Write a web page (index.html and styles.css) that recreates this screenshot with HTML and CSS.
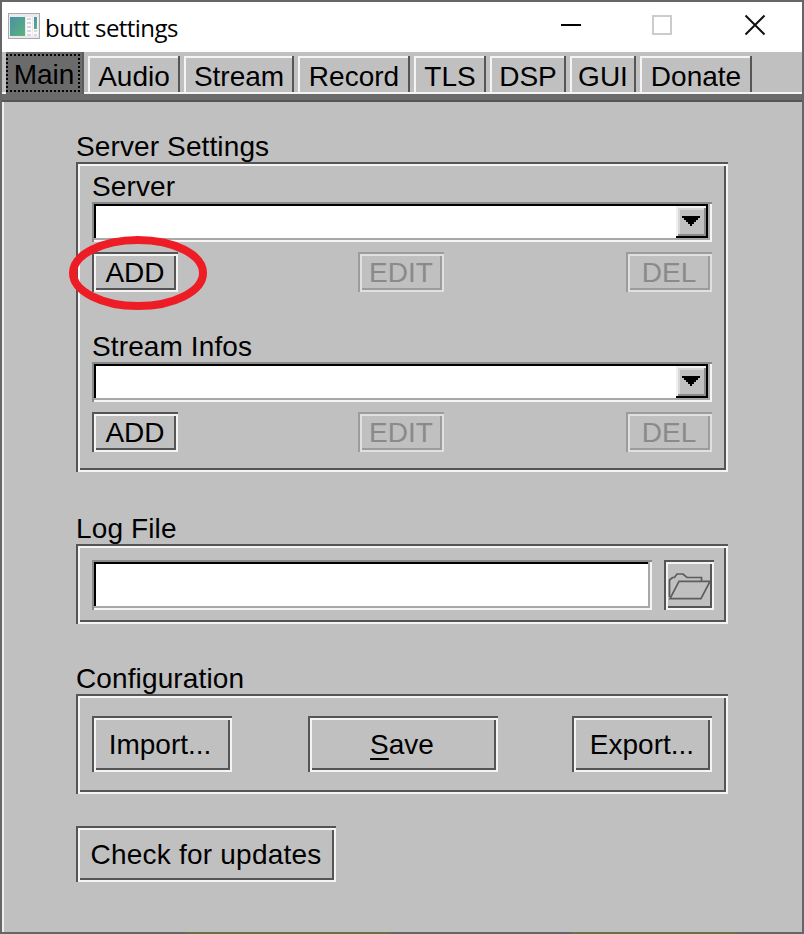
FILE: index.html
```html
<!DOCTYPE html>
<html lang="en">
<head>
<meta charset="utf-8">
<title>butt settings</title>
<link rel="stylesheet" href="styles.css">
</head>
<body>
<div class="window">
  <header class="titlebar">
    <svg class="app-icon" width="32" height="26" viewBox="0 0 32 26">
      <defs>
        <linearGradient id="screen" x1="0" y1="0" x2="1" y2="1"><stop offset="0" stop-color="#4a8fa8"/><stop offset="1" stop-color="#5bb577"/></linearGradient>
      </defs>
      <rect x=".5" y=".5" width="31" height="25" fill="#e9e9ef" stroke="#a9a9b0"/>
      <rect x="2" y="4" width="15" height="19" fill="url(#screen)"/>
      <path d="M18 4h6v19h-6zM25 4h5v19h-5z" fill="#fafafc"/>
      <path d="M19 6h4M19 10h4M19 14h4M19 18h4M19 22h4M26 18h3M26 22h3" stroke="#b3b3bb" stroke-width="1"/>
      <rect x="26" y="4" width="3" height="12" fill="url(#screen)"/>
    </svg>
    <h1 class="title">butt settings</h1>
    <svg class="controls" width="206" height="22" viewBox="0 0 206 22" fill="none" stroke-width="2">
      <path d="M1 11h20" stroke="#000"/>
      <rect x="93" y="2" width="18" height="18" stroke="#ccc"/>
      <path d="M185.500 1.500l19 19M204.500 1.500l-19 19" stroke="#111"/>
    </svg>
  </header>
  <nav class="tabs">
    <div class="tab active">Main</div>
    <div class="tab audio">Audio</div>
    <div class="tab stream">Stream</div>
    <div class="tab record">Record</div>
    <div class="tab tls">TLS</div>
    <div class="tab dsp">DSP</div>
    <div class="tab gui">GUI</div>
    <div class="tab donate">Donate</div>
  </nav>
  <main class="panel">
    <h2 class="label">Server Settings</h2>
    <section class="group server-group">
      <div class="label">Server</div>
      <div class="field combo"><span class="drop"><svg width="18" height="10" viewBox="0 0 18 10"><path d="M0 0h18v2h-2v2h-2v2h-2v2h-2v2h-2v-2h-2v-2h-2v-2h-2v-2h-2z"/></svg></span></div>
      <div class="row">
        <div class="anchor"><button class="btn small">ADD</button>
          <svg class="ring" width="140" height="76" viewBox="0 0 140 76"><ellipse cx="70" cy="38" rx="65" ry="33" fill="none" stroke="#ee1c24" stroke-width="8"/></svg>
        </div>
        <button class="btn small off edit" disabled>EDIT</button>
        <button class="btn small off" disabled>DEL</button>
      </div>
      <div class="label second">Stream Infos</div>
      <div class="field combo"><span class="drop"><svg width="18" height="10" viewBox="0 0 18 10"><path d="M0 0h18v2h-2v2h-2v2h-2v2h-2v2h-2v-2h-2v-2h-2v-2h-2v-2h-2z"/></svg></span></div>
      <div class="row">
        <button class="btn small">ADD</button>
        <button class="btn small off edit" disabled>EDIT</button>
        <button class="btn small off" disabled>DEL</button>
      </div>
    </section>
    <h2 class="label log-label">Log File</h2>
    <section class="group log-group">
      <div class="field path"></div>
      <button class="btn browse" aria-label="Browse">
        <svg width="50" height="50" viewBox="0 0 50 50" fill="none" stroke="#5c5c5c" stroke-width="1.700">
          <path d="M5.500 37V20l3-2.500h2L13 14h6l4 3.500h14.500V21"/>
          <path d="M15 21.300h31L37 38.700H6z"/>
        </svg>
      </button>
    </section>
    <h2 class="label config-label">Configuration</h2>
    <section class="group config-group">
      <button class="btn import">Import...</button>
      <button class="btn save"><span class="key">S</span>ave</button>
      <button class="btn">Export...</button>
    </section>
    <button class="btn update">Check for updates</button>
  </main>
</div>
</body>
</html>
```

FILE: styles.css
```css
* { box-sizing: border-box; }

body {
  margin: 0;
  font: 28px/32px "Liberation Sans", Arial, sans-serif;
  color: #000;
}

.window {
  display: flex;
  flex-direction: column;
  width: 804px;
  height: 934px;
  padding: 2px;
  background: linear-gradient(90deg, #666 186px, #6c7048 186px 390px, #666 390px 572px, #6c7048 572px 737px, #666 737px);
  box-shadow: inset 0 2px #666;
}

.titlebar {
  display: flex;
  flex: none;
  height: 50px;
  padding-left: 6px;
  background: #fff;
}

.app-icon { margin-top: 11px; }

.title {
  margin: 9px 0 0 5px;
  font: 24px/34px "Open Sans", "Noto Sans", sans-serif;
  letter-spacing: -.55px;
}

.controls { margin: 12px 36px 0 auto; }

.tabs {
  display: flex;
  flex: none;
  align-items: flex-end;
  gap: 4px;
  height: 50px;
  padding: 0 0 10px 2px;
  background: linear-gradient(#c0c0c0 40px, #f4f4f4 40px 42px, #6b6b6b 42px 48px, #555 48px);
}

.tab {
  height: 36px;
  padding-top: 5px;
  text-align: center;
  white-space: nowrap;
  box-shadow: inset -2px 0 #555, inset 2px 2px #f4f4f4;
}

.tab.active {
  position: relative;
  width: 78px;
  height: 42px;
  margin: 0 0 -2px 2px;
  padding: 7px 2px 0 0;
  background: #6b6b6b;
  box-shadow: inset -2px 0 #5c5c5c;
}

.tab.active::after {
  content: "";
  position: absolute;
  inset: 2px 4px 2px 0;
  border: 2px dotted #000;
}

.audio { width: 92px; }
.stream { width: 110px; }
.record { width: 112px; }
.tls { width: 72px; }
.dsp { width: 76px; }
.gui { width: 66px; }
.donate { width: 112px; }

.panel {
  flex: 1;
  padding: 28px 74px 0 72px;
  background: #c0c0c0;
  border-left: 2px solid #eee;
}

.label {
  height: 32px;
  margin: 0;
  font-size: 28px;
  font-weight: 400;
  line-height: 34px;
  letter-spacing: .12px;
}

.group {
  padding: 8px 16px 0;
  box-shadow: inset 2px 2px #555, inset -2px -2px #f4f4f4, inset 4px 4px #f4f4f4, inset -4px -4px #555;
}

.server-group { height: 310px; }

.field {
  background: #fff;
  box-shadow: inset 2px 2px #8a8a8a, inset -2px -2px #f4f4f4, inset -4px -4px #a8a8a8, inset 4px 4px #000;
}

.combo {
  display: flex;
  justify-content: flex-end;
  height: 40px;
  padding: 2px 4px 4px;
}

.drop {
  width: 32px;
  padding: 12px 6px 0;
  line-height: 0;
  background: #c0c0c0;
  box-shadow: inset -2px -2px #000, inset 0 2px #000, inset 2px 4px #f0f0f0, inset -4px -4px #8a8a8a, inset 4px 6px #d8d8d8;
}

.row {
  display: flex;
  justify-content: space-between;
  margin-top: 10px;
}

.anchor { position: relative; height: 40px; }

.ring {
  position: absolute;
  left: -24px;
  top: -17px;
}

.second { margin-top: 38px; }

.btn {
  width: 140px;
  height: 56px;
  margin: 0;
  padding: 2px 0 0;
  border: 0;
  font: inherit;
  color: #000;
  background: #c0c0c0;
  box-shadow: inset 2px 2px #555, inset -2px -2px #f4f4f4, inset 4px 4px #f4f4f4, inset -4px -4px #555;
}

.btn.small { width: 86px; height: 40px; }

.btn.off {
  color: #8a8a8a;
  box-shadow: inset 2px 2px #9c9c9c, inset -2px -2px #e0e0e0, inset 4px 4px #e0e0e0, inset -4px -4px #9c9c9c;
}

.btn.edit { margin-right: 2px; }

.log-label { margin-top: 40px; }

.log-group {
  display: flex;
  gap: 12px;
  height: 80px;
  padding: 16px 14px 0 16px;
}

.path { width: 560px; height: 50px; }

.btn.browse { width: 50px; height: 50px; padding: 0; line-height: 0; }

.config-label { margin-top: 38px; }

.config-group {
  display: flex;
  justify-content: space-between;
  height: 100px;
  padding-top: 22px;
}

.btn.import { padding-right: 4px; }

.btn.save { width: 190px; margin-left: 2px; padding-right: 2px; }

.key {
  text-decoration: underline;
  text-decoration-thickness: 2px;
  text-underline-offset: 4px;
}

.btn.update {
  display: block;
  width: 260px;
  margin-top: 32px;
  letter-spacing: .22px;
}
```
